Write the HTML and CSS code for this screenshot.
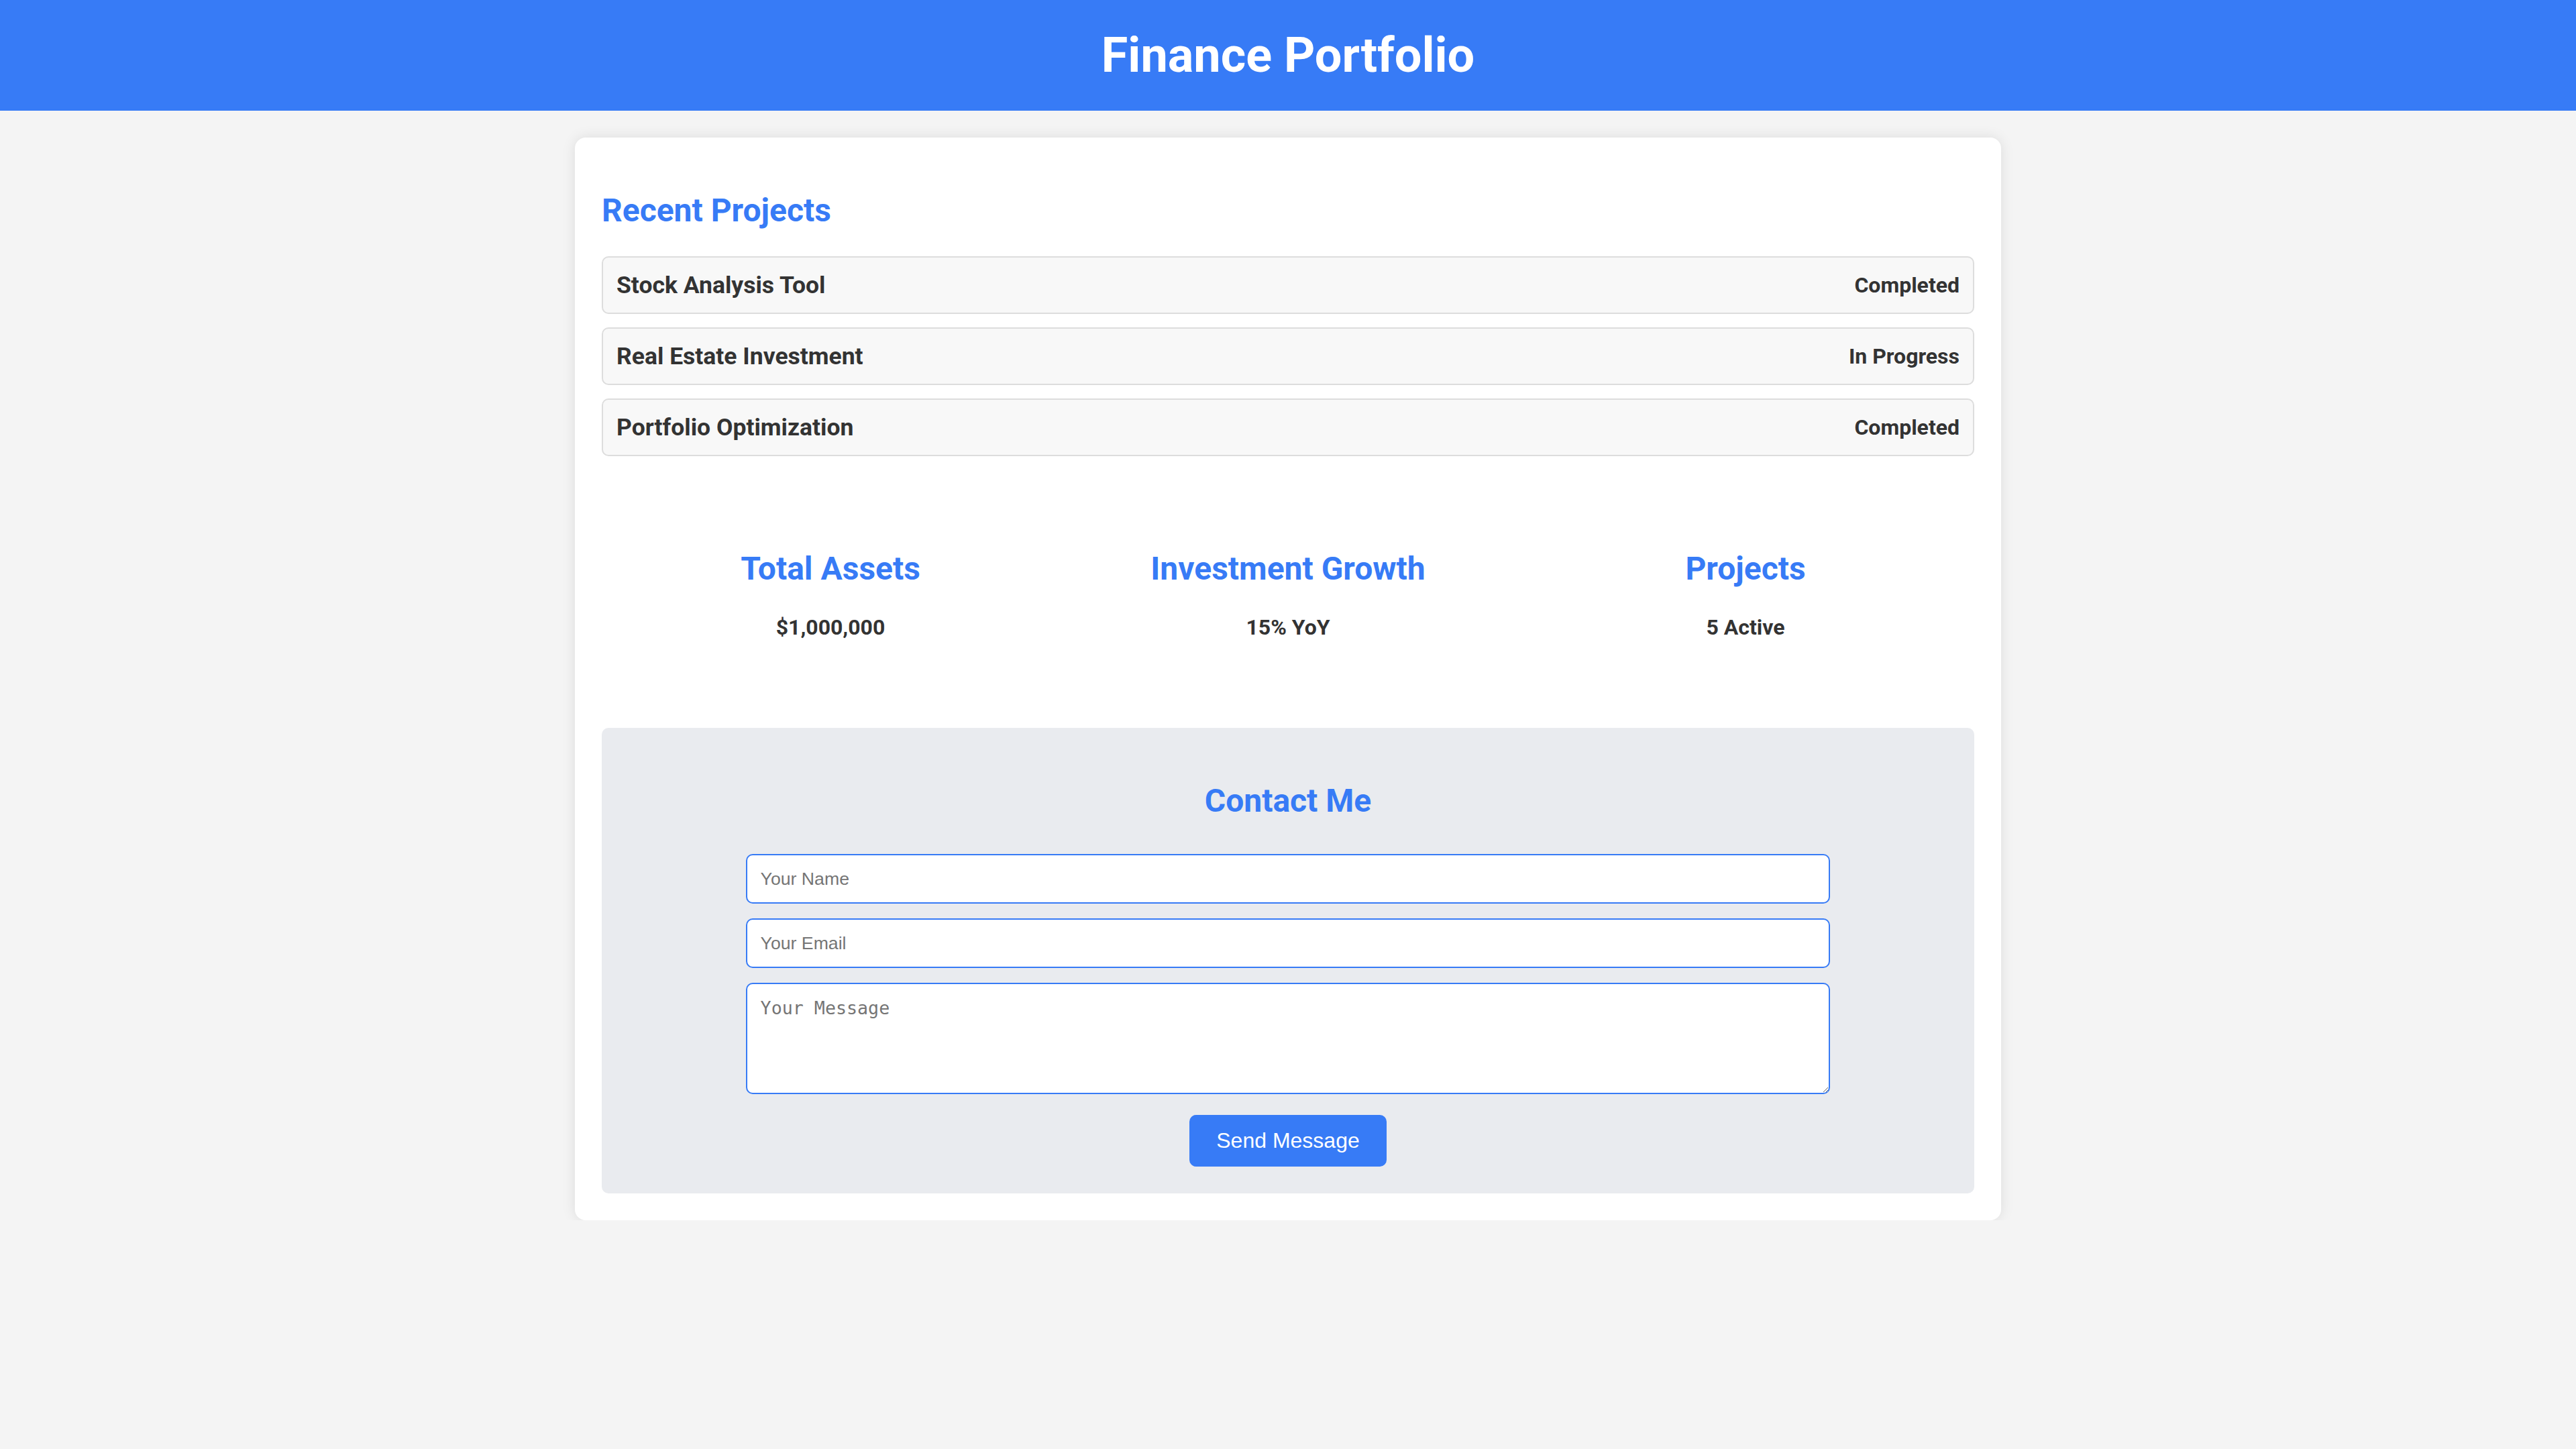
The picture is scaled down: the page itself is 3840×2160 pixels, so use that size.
FILE: index.html
```html
<!DOCTYPE html>
<html lang="en">
<head>
<meta charset="utf-8">
<title>Finance Portfolio</title>
<link rel="stylesheet" href="styles.css">
</head>
<body>
<header class="site-header">
  <h1 class="site-title">Finance Portfolio</h1>
</header>
<main class="container">
  <section class="projects">
    <h2 class="section-title">Recent Projects</h2>
    <ul class="project-list">
      <li class="project"><span class="project-name">Stock Analysis Tool</span><span class="project-status">Completed</span></li>
      <li class="project"><span class="project-name">Real Estate Investment</span><span class="project-status">In Progress</span></li>
      <li class="project"><span class="project-name">Portfolio Optimization</span><span class="project-status">Completed</span></li>
    </ul>
  </section>
  <section class="stats">
    <div class="stat">
      <h3 class="stat-title">Total Assets</h3>
      <p class="stat-value">$1,000,000</p>
    </div>
    <div class="stat">
      <h3 class="stat-title">Investment Growth</h3>
      <p class="stat-value">15% YoY</p>
    </div>
    <div class="stat">
      <h3 class="stat-title">Projects</h3>
      <p class="stat-value">5 Active</p>
    </div>
  </section>
  <section class="contact">
    <h2 class="section-title contact-title">Contact Me</h2>
    <form class="contact-form">
      <input class="field" type="text" placeholder="Your Name">
      <input class="field" type="email" placeholder="Your Email">
      <textarea class="field field-message" placeholder="Your Message"></textarea>
      <button class="send-btn" type="button">Send Message</button>
    </form>
  </section>
</main>
</body>
</html>
```
FILE: styles.css
```css
html, body {
  margin: 0;
  padding: 0;
}
body {
  background: #f4f4f4;
  font-family: Roboto, "Liberation Sans", Arial, sans-serif;
  color: #333;
}
.site-header {
  background: #377bf6;
  padding: 40px 0;
  text-align: center;
}
.site-title {
  margin: 0;
  color: #fff;
  font-size: 72px;
  font-weight: 700;
  line-height: normal;
}
.container {
  width: 2046px;
  margin: 40px auto 0;
  padding: 40px;
  background: #fff;
  border-radius: 16px;
  box-shadow: 0 0 20px rgba(0, 0, 0, 0.1);
}
.section-title {
  color: #377bf6;
  font-size: 48px;
  font-weight: 700;
  margin: 40px 0 40px;
  line-height: normal;
}
.project-list {
  list-style: none;
  margin: 0;
  padding: 0;
}
.project {
  display: flex;
  justify-content: space-between;
  align-items: center;
  padding: 20px;
  margin-bottom: 20px;
  background: #f8f8f8;
  border: 2px solid #ddd;
  border-radius: 10px;
}
.project-name {
  font-size: 35.5px;
  font-weight: 700;
  color: #333;
}
.project-status {
  font-size: 32px;
  font-weight: 700;
  color: #333;
}
.stats {
  display: flex;
  margin: 40px 0;
}
.stat {
  flex: 1;
  text-align: center;
  padding: 40px 0;
}
.stat-title {
  color: #377bf6;
  font-size: 48px;
  font-weight: 700;
  margin: 59px 0 40px;
  line-height: normal;
}
.stat-value {
  font-size: 32px;
  font-weight: 700;
  color: #333;
  margin: 0 0 51px;
}
.contact {
  background: #e9ebef;
  border-radius: 10px;
  padding: 40px;
  text-align: center;
}
.contact-title {
  margin: 40px 0 51px;
}
.contact-form {
  display: flex;
  flex-direction: column;
  align-items: center;
}
.field {
  display: block;
  width: 80%;
  height: 30px;
  padding: 20px;
  border: 2px solid #377bf6;
  border-radius: 10px;
  background: #fff;
  font-family: "Liberation Sans", Arial, sans-serif;
  font-size: 26.67px;
  color: #333;
  margin: 0 0 22px;
  outline: none;
}
.field::placeholder {
  color: #757575;
}
.field-message {
  height: 122px;
  font-family: "DejaVu Sans Mono", "Liberation Mono", monospace;
  margin-bottom: 31px;
}
.send-btn {
  background: #377bf6;
  color: #fff;
  border: none;
  border-radius: 10px;
  padding: 20px 40px;
  font-family: "Liberation Sans", Arial, sans-serif;
  font-size: 32px;
  line-height: normal;
  cursor: pointer;
}
```
